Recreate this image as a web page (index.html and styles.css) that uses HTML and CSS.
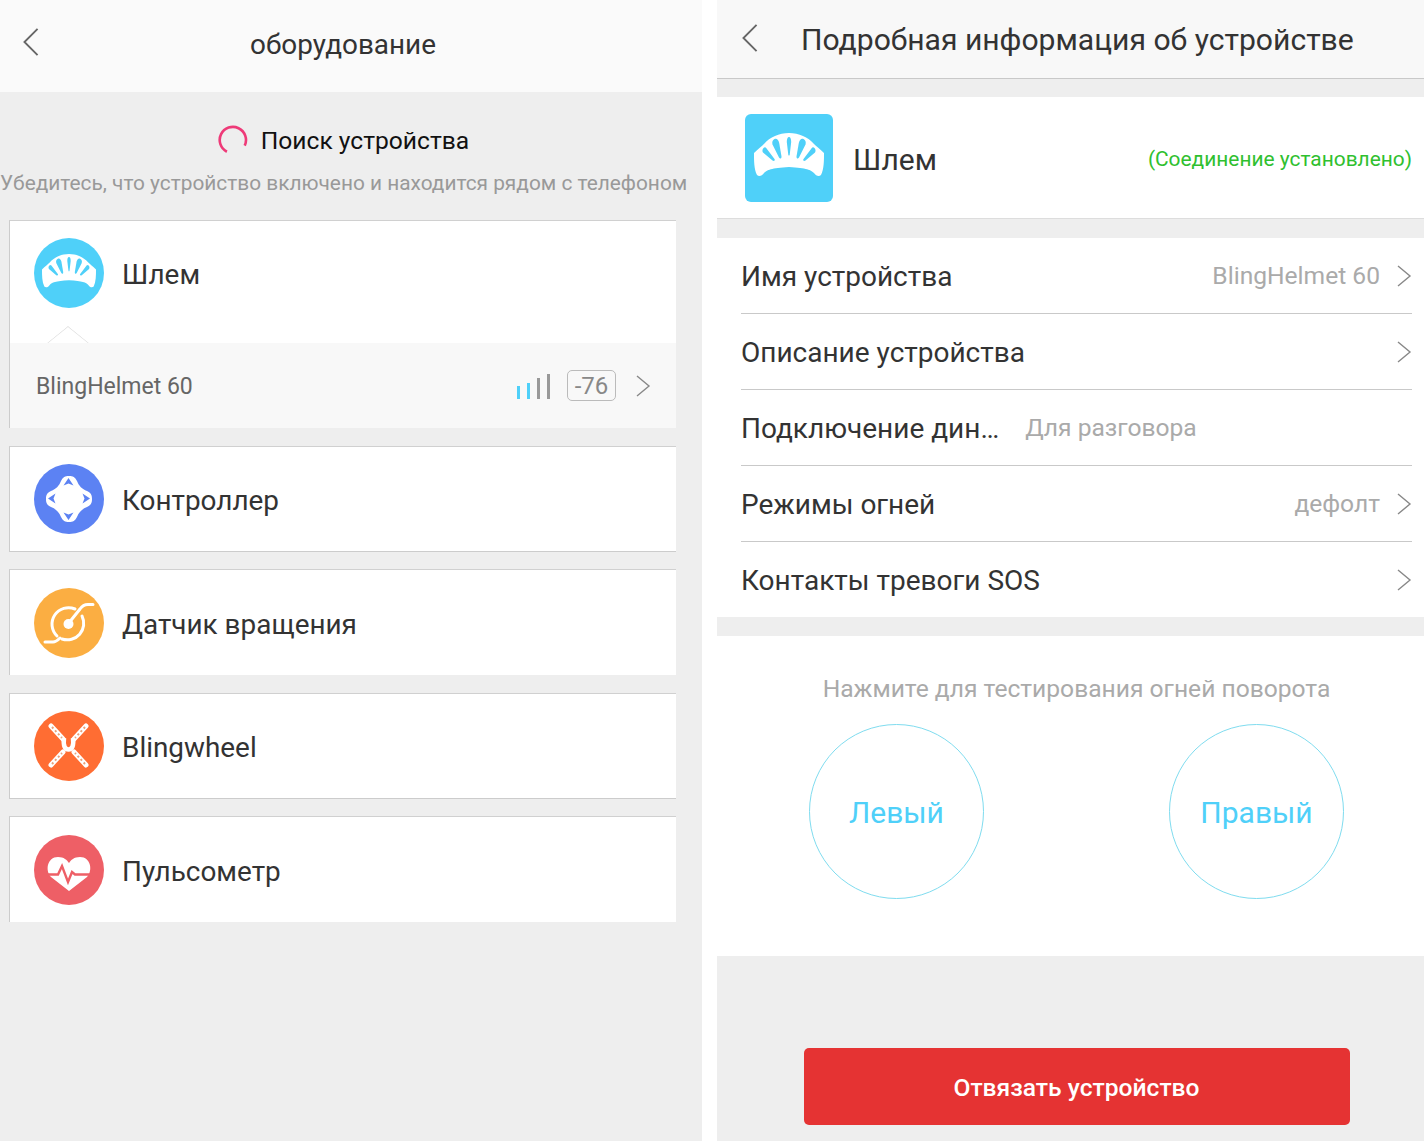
FILE: index.html
```html
<!DOCTYPE html>
<html lang="ru">
<head>
<meta charset="utf-8">
<title>Устройства</title>
<link rel="stylesheet" href="styles.css">
</head>
<body>
<svg class="defs" width="0" height="0" aria-hidden="true">
  <symbol id="helmet" viewBox="0 0 70 44">
    <path fill="#fff" d="M0 20C4 16 8 13 10 11C16 4 25 0 35 0C45 0 54 4 60 11C62 13 66 16 70 20C70 28 70 36 67 42C65 44 62 43 60 40C57 37 53 35 35 34C17 35 13 37 10 40C8 43 5 44 3 42C0 36 0 28 0 20Z"/>
    <g fill="#4fd0f9">
      <path d="M35 4C36.500 4 37.200 6 37.200 9L35.800 21C35.800 23 34.200 23 34.200 21L32.800 9C32.800 6 33.500 4 35 4Z"/>
      <path d="M20.500 6C22.800 5 24.500 7 25.200 10L27.500 23.500C27.500 26 26 26 25 24.500L18.500 11.500C17.800 9 18.500 7 20.500 6Z"/>
      <path d="M9.500 15C10.500 14 11.500 14 12.200 15L20.500 26C21.500 27.500 20 28.500 18.500 27.500L9 19.500C8 18 8.500 16 9.500 15Z"/>
      <path d="M49.500 6C47.200 5 45.500 7 44.800 10L42.500 23.500C42.500 26 44 26 45 24.500L51.500 11.500C52.200 9 51.500 7 49.500 6Z"/>
      <path d="M60.500 15C59.500 14 58.500 14 57.800 15L49.500 26C48.500 27.500 50 28.500 51.500 27.500L61 19.500C62 18 61.500 16 60.500 15Z"/>
    </g>
  </symbol>
  <symbol id="chev-r" viewBox="0 0 16 24">
    <path d="M2 2L14 12L2 22" fill="none" stroke="currentColor" stroke-width="1.4"/>
  </symbol>
  <symbol id="chev-l" viewBox="0 0 18 32">
    <path d="M16 2L2 16L16 30" fill="none" stroke="currentColor" stroke-width="2"/>
  </symbol>
</svg>
<main class="screens">
  <section class="panel panel-left">
    <header class="bar bar-left">
      <svg class="back"><use href="#chev-l"/></svg>
      <h1 class="bar-title">оборудование</h1>
    </header>
    <div class="search">
      <svg class="spinner" viewBox="0 0 32 32"><path d="M9.5 28.5A14 14 0 1 1 28.5 22" fill="none" stroke="#ee3a78" stroke-width="2.8"/></svg>
      <span class="search-text">Поиск устройства</span>
    </div>
    <p class="hint">Убедитесь, что устройство включено и находится рядом с телефоном</p>
    <div class="cards">
      <article class="card card-first">
        <div class="card-row card-row-first">
          <span class="avatar avatar-helmet"><svg class="helmet-small"><use href="#helmet"/></svg></span>
          <span class="card-name">Шлем</span>
        </div>
        <div class="found">
          <span class="notch"></span>
          <span class="found-name">BlingHelmet 60</span>
          <span class="signal"><i class="sig sig-1"></i><i class="sig sig-2"></i><i class="sig sig-3"></i><i class="sig sig-4"></i></span>
          <span class="rssi">-76</span>
          <svg class="found-chev"><use href="#chev-r"/></svg>
        </div>
      </article>
      <article class="card card-line">
        <div class="card-row">
          <span class="avatar avatar-ctrl">
            <svg viewBox="0 0 70 70" class="avatar-svg">
              <path fill="#fff" d="M35 12C39 12 41 13 43 17C45 22 48 25 53 27C57 29 58 31 58 35C58 39 57 41 53 43C48 45 45 48 43 53C41 57 39 58 35 58C31 58 29 57 27 53C25 48 22 45 17 43C13 41 12 39 12 35C12 31 13 29 17 27C22 25 25 22 27 17C29 13 31 12 35 12Z"/>
              <path fill="#5c82f3" d="M34.5 14L39.5 21.5L34.5 19.5L29.5 21.5ZM34.5 56L29.5 48.5L34.5 50.5L39.5 48.5ZM14 34.5L21.5 29.5L19.5 34.5L21.5 39.5ZM56 34.5L48.5 39.5L50.5 34.5L48.5 29.5Z"/>
            </svg>
          </span>
          <span class="card-name">Контроллер</span>
        </div>
      </article>
      <article class="card">
        <div class="card-row">
          <span class="avatar avatar-rot">
            <svg viewBox="0 0 70 70" class="avatar-svg" fill="none" stroke="#fff" stroke-linecap="round">
              <path stroke-width="3" d="M41 21A16.5 16.5 0 0 0 23 48M48 28A16.5 16.5 0 0 1 28 51"/>
              <path stroke-width="3" d="M34 36L46 21C48 18 50 16.5 54 16.5H59M11 54H19C22 54 24 52 26 50"/>
              <circle cx="34.5" cy="36" r="5" fill="#fff" stroke="none"/>
            </svg>
          </span>
          <span class="card-name">Датчик вращения</span>
        </div>
      </article>
      <article class="card card-line">
        <div class="card-row">
          <span class="avatar avatar-wheel">
            <svg viewBox="0 0 70 70" class="avatar-svg" fill="none">
              <path stroke="#fff" stroke-width="5" stroke-linecap="round" d="M17 15L29 28M52 15L40 28M17 54L29 41M52 54L40 41"/>
              <path stroke="#e9a27c" stroke-width="2" stroke-dasharray="2 2.5" d="M18 16L28 27M51 16L41 27M18 53L28 42M51 53L41 42"/>
              <path stroke="#fff" stroke-width="4.5" d="M30 27C29 35 31 38.500 34.500 38.500C38 38.500 40 35 39 27"/>
            </svg>
          </span>
          <span class="card-name">Blingwheel</span>
        </div>
      </article>
      <article class="card">
        <div class="card-row">
          <span class="avatar avatar-heart">
            <svg viewBox="0 0 70 70" class="avatar-svg">
              <path fill="#fff" d="M35 56L17 42C11 36 13 22 24 22C30 22 33 25 35 28C37 25 40 22 46 22C57 22 59 36 53 42Z"/>
              <path fill="none" stroke="#ee5f66" stroke-width="2.400" d="M14 39.500H24L28 31L34 47L38 37L41 39.500H56"/>
            </svg>
          </span>
          <span class="card-name">Пульсометр</span>
        </div>
      </article>
    </div>
  </section>

  <section class="panel panel-right">
    <header class="bar bar-right">
      <svg class="back back-right"><use href="#chev-l"/></svg>
      <h1 class="bar-title bar-title-right">Подробная информация об устройстве</h1>
    </header>
    <div class="device">
      <span class="device-icon"><svg class="helmet-large"><use href="#helmet"/></svg></span>
      <span class="device-name">Шлем</span>
      <span class="device-status">(Соединение установлено)</span>
    </div>
    <ul class="settings">
      <li class="setting"><span class="setting-name">Имя устройства</span><span class="setting-value">BlingHelmet 60</span><svg class="setting-chev"><use href="#chev-r"/></svg></li>
      <li class="setting"><span class="setting-name">Описание устройства</span><svg class="setting-chev"><use href="#chev-r"/></svg></li>
      <li class="setting"><span class="setting-name">Подключение дин…</span><span class="setting-value setting-value-left">Для разговора</span></li>
      <li class="setting"><span class="setting-name">Режимы огней</span><span class="setting-value">дефолт</span><svg class="setting-chev"><use href="#chev-r"/></svg></li>
      <li class="setting"><span class="setting-name">Контакты тревоги SOS</span><svg class="setting-chev"><use href="#chev-r"/></svg></li>
    </ul>
    <div class="test">
      <p class="test-hint">Нажмите для тестирования огней поворота</p>
      <div class="test-buttons">
        <button class="circle" type="button">Левый</button>
        <button class="circle" type="button">Правый</button>
      </div>
    </div>
    <div class="footer">
      <button class="unbind" type="button">Отвязать устройство</button>
    </div>
  </section>
</main>
</body>
</html>
```
FILE: styles.css
```css
* { box-sizing: border-box; }
html, body { margin: 0; padding: 0; }
body {
  width: 1424px;
  height: 1141px;
  overflow: hidden;
  background: #fff;
  font-family: Roboto, "Noto Sans", sans-serif;
  color: #333;
}
.defs { display: block; height: 0; }
.screens { display: flex; gap: 15px; height: 1141px; }
.panel { display: flex; flex-direction: column; background: #eee; height: 1141px; }
.panel-left { width: 702px; }
.panel-right { width: 707px; }

.bar { position: relative; display: flex; align-items: center; background: #fafafa; }
.bar-left { height: 92px; justify-content: center; padding: 0 16px 4px 0; }
.bar-right { height: 79px; border-bottom: 1px solid #c9c9c9; padding-left: 84px; background: #f8f8f8; }
.bar-title { margin: 0; font-weight: 400; font-size: 27.9px; color: #333; }
.bar-title-right { font-size: 30.1px; }
.back { position: absolute; left: 22px; top: 27px; width: 18px; height: 30px; color: #666; }
.back-right { left: 24px; top: 23px; }

.search { display: flex; align-items: center; justify-content: center; gap: 13px; height: 32px; margin-top: 32px; padding-right: 15px; }
.spinner { width: 30px; height: 30px; }
.search-text { font-size: 24.6px; color: #111; }
.hint { margin: 9px 16px 0 0; height: 36px; line-height: 36px; font-size: 20.85px; color: #999; text-align: center; white-space: nowrap; }

.cards { display: flex; flex-direction: column; gap: 18px; margin: 19px 26px 0 9px; }
.card { display: flex; flex-direction: column; height: 106px; background: #fff; border-left: 1px solid #ccc; border-top: 1px solid #d0d0d0; }
.card-first { height: 208px; }
.card-line { border-bottom: 1px solid #ccc; margin-bottom: -1px; }
.card-row { display: flex; align-items: center; gap: 18px; flex: 1; padding-left: 24px; }
.card-row-first { flex: none; height: 122px; padding-bottom: 18px; }
.avatar { display: flex; align-items: center; justify-content: center; width: 70px; height: 70px; border-radius: 50%; flex: none; }
.avatar-svg { width: 70px; height: 70px; display: block; }
.avatar-helmet { background: #4fd0f9; padding-bottom: 4px; }
.avatar-ctrl { background: #5c82f3; }
.avatar-rot { background: #fbae42; }
.avatar-wheel { background: #ff6d33; }
.avatar-heart { background: #ee5f66; }
.helmet-small { width: 54px; height: 34px; }
.card-name { padding-top: 3px; font-size: 27.9px; color: #333; }

.found { position: relative; display: flex; align-items: center; height: 85px; padding: 0 25px 0 26px; background: #f8f8f8; }
.notch {
  position: absolute; left: 43px; top: -15px; width: 30px; height: 30px;
  background: #fff; border-left: 1px solid #e2e2e2; border-top: 1px solid #e2e2e2;
  transform: scaleY(0.81) rotate(45deg);
  clip-path: polygon(0 0, 100% 0, 0 100%);
}
.found-name { padding-top: 2px; font-size: 23px; color: #666; margin-right: auto; }
.signal { display: flex; align-items: flex-end; gap: 7px; height: 26px; margin-right: 17px; }
.sig { display: block; width: 3px; background: #999; }
.sig-1 { height: 13px; background: #4fd0f9; }
.sig-2 { height: 16px; background: #4fd0f9; }
.sig-3 { height: 21px; }
.sig-4 { height: 25px; }
.rssi { display: flex; align-items: center; justify-content: center; width: 49px; height: 31px; border: 1px solid #bbb; border-radius: 5px; font-size: 24px; color: #888; margin-right: 19px; }
.found-chev { width: 16px; height: 24px; color: #888; }

.device { display: flex; align-items: center; height: 122px; margin-top: 18px; padding: 0 12px 0 28px; background: #fff; border-bottom: 1px solid #ddd; }
.device-icon { display: flex; align-items: center; justify-content: center; width: 88px; height: 88px; border-radius: 6px; background: #4fd0f9; padding-bottom: 6px; }
.helmet-large { width: 70px; height: 44px; }
.device-name { margin-left: 20px; padding-top: 3px; font-size: 30px; color: #333; }
.device-status { margin-left: auto; padding-top: 2px; font-size: 20.9px; color: #2fc02f; }

.settings { list-style: none; margin: 19px 0 0; padding: 0 12px 0 24px; background: #fff; }
.setting { display: flex; align-items: center; height: 76px; border-bottom: 1px solid #c9c9c9; }
.setting:last-child { border-bottom: 0; height: 75px; }
.setting-name { padding-top: 2px; font-size: 28px; color: #333; white-space: nowrap; }
.setting-value { margin-left: auto; font-size: 24.6px; color: #aaa; }
.setting-value-left { margin-left: 26px; }
.setting-chev { width: 16px; height: 24px; margin-left: auto; color: #888; }
.setting-value + .setting-chev { margin-left: 16px; }

.test { margin-top: 19px; height: 320px; padding-top: 36px; background: #fff; }
.test-hint { margin: 0; padding-left: 12px; height: 34px; line-height: 34px; text-align: center; font-size: 24.6px; color: #aaa; }
.test-buttons { display: flex; justify-content: space-between; padding: 0 80px 0 92px; margin-top: 18px; }
.circle { width: 175px; height: 175px; border: 1px solid #7fdcef; border-radius: 50%; background: #fff; font-family: inherit; font-size: 30px; color: #4fd0f9; padding: 2px 0 0; }

.footer { display: flex; justify-content: center; padding: 92px 0 0 12px; }
.unbind { width: 546px; height: 77px; border: 0; border-radius: 5px; background: #e53333; color: #fff; font-family: inherit; font-size: 24.6px; font-weight: 500; padding: 2px 0 0; }
```
